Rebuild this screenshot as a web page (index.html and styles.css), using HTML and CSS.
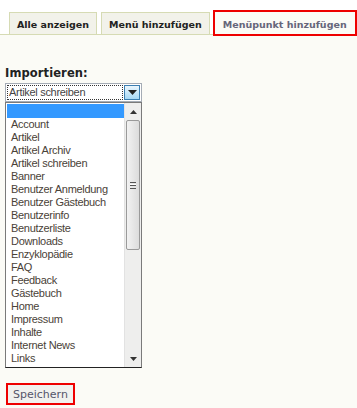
FILE: index.html
```html
<!DOCTYPE html>
<html lang="de">
<head>
    <meta charset="UTF-8">
    <title>Menü - Menüpunkt hinzufügen</title>
    <link rel="stylesheet" href="styles.css">
</head>
<body>
    <ul class="tabs">
        <li class="tab">Alle anzeigen</li>
        <li class="tab">Menü hinzufügen</li>
        <li class="tab active">Menüpunkt hinzufügen</li>
    </ul>

    <main class="content">
        <label class="field-label">Importieren:</label>
        <div class="combo">
            <div class="combo-box">
                <span class="combo-value">Artikel schreiben</span>
                <span class="combo-btn">
                    <svg width="9" height="5" viewBox="0 0 9 5"><path d="M0 0h9L4.5 5z" fill="#222"/></svg>
                </span>
            </div>
            <div class="combo-list">
                <ul class="options">
                    <li class="selected">&nbsp;</li>
                    <li>Account</li>
                    <li>Artikel</li>
                    <li>Artikel Archiv</li>
                    <li>Artikel schreiben</li>
                    <li>Banner</li>
                    <li>Benutzer Anmeldung</li>
                    <li>Benutzer Gästebuch</li>
                    <li>Benutzerinfo</li>
                    <li>Benutzerliste</li>
                    <li>Downloads</li>
                    <li>Enzyklopädie</li>
                    <li>FAQ</li>
                    <li>Feedback</li>
                    <li>Gästebuch</li>
                    <li>Home</li>
                    <li>Impressum</li>
                    <li>Inhalte</li>
                    <li>Internet News</li>
                    <li>Links</li>
                </ul>
                <div class="scrollbar">
                    <span class="arrow">
                        <svg width="7" height="4" viewBox="0 0 7 4"><path d="M0 4h7L3.5 0z" fill="#333"/></svg>
                    </span>
                    <div class="track">
                        <div class="thumb"><span class="grip"></span></div>
                    </div>
                    <span class="arrow">
                        <svg width="7" height="4" viewBox="0 0 7 4"><path d="M0 0h7L3.5 4z" fill="#333"/></svg>
                    </span>
                </div>
            </div>
        </div>

        <button class="save">Speichern</button>
    </main>
</body>
</html>
```

FILE: styles.css
```css
/* General */
body {
    margin: 0;
    background-color: #fbfbf6;
    font-family: "DejaVu Sans", Verdana, sans-serif;
    color: #333;
}

/* Tabs */
.tabs {
    display: flex;
    align-items: flex-end;
    gap: 4px;
    margin: 0;
    padding: 0 0 0 9px;
    list-style: none;
    background-color: #fff;
    border-bottom: 1px solid #d6dbb4;
    height: 34px;
}

.tab {
    height: 21px;
    line-height: 23px;
    padding: 0 7px;
    font-size: 9.5px;
    font-weight: bold;
    white-space: nowrap;
    color: #222;
    background-color: #f2f2ea;
    border: 1px solid #d6dbb4;
    border-bottom: none;
}

.tab.active {
    height: 22px;
    line-height: 25px;
    padding: 0 8px;
    margin-left: -1px;
    margin-bottom: -2px;
    color: #66667a;
    background-color: #fbfbf6;
    border: 2px solid #ee0000;
}

/* Content */
.content {
    padding: 31px 5px 0;
}

.field-label {
    display: block;
    font-size: 11.5px;
    font-weight: bold;
    color: #222;
    letter-spacing: 0.1px;
    margin-bottom: 3px;
}

/* Combo box */
.combo {
    width: 137px;
    font-family: "Liberation Sans", Arial, sans-serif;
    font-size: 11px;
    letter-spacing: -0.3px;
}

.combo-box {
    display: flex;
    align-items: center;
    height: 15px;
    border: 1px solid #a5acb5;
    background-color: #fff;
    padding: 1px;
}

.combo-value {
    flex: 1;
    height: 13px;
    line-height: 13px;
    padding-left: 1px;
    color: #444;
    border: 1px dotted #333;
    margin-right: 1px;
}

.combo-btn {
    display: flex;
    align-items: center;
    justify-content: center;
    width: 14px;
    height: 13px;
    border: 1px solid #3c7fb1;
    background: linear-gradient(#eaf6fd, #a7d9f5);
}

.combo-list {
    display: flex;
    height: 264px;
    border: 1px solid #7a7a7a;
    border-bottom-color: #222;
    background-color: #fff;
    overflow: hidden;
}

.options {
    flex: 1;
    margin: 0;
    padding: 1px 0 0 1px;
    list-style: none;
}

.options li {
    height: 13px;
    line-height: 13px;
    padding-left: 4px;
    color: #4a4238;
    white-space: nowrap;
}

.options li.selected {
    background-color: #3399ff;
    height: 14px;
}

/* Scrollbar */
.scrollbar {
    display: flex;
    flex-direction: column;
    width: 16px;
    background-color: #eeeeed;
    border-left: 1px solid #e2e2e2;
}

.arrow {
    display: flex;
    align-items: center;
    justify-content: center;
    height: 17px;
}

.track {
    flex: 1;
}

.thumb {
    display: flex;
    align-items: center;
    justify-content: center;
    height: 128px;
    margin: 0 1px;
    border: 1px solid #9a9a9a;
    border-radius: 2px;
    background: linear-gradient(90deg, #f2f2f2, #dcdcdc);
}

.grip {
    width: 6px;
    height: 5px;
    border-top: 1px solid #555;
    border-bottom: 1px solid #555;
    background: linear-gradient(#fff 0 1px, #555 1px 2px, transparent 2px);
    background-position: 0 1px;
    background-repeat: no-repeat;
}

/* Button */
.save {
    margin-top: 15px;
    margin-left: 1px;
    padding: 1px 5px;
    height: 22px;
    font-family: "DejaVu Sans", Verdana, sans-serif;
    font-size: 11px;
    color: #55556a;
    background-color: #f1f1ee;
    border: 2px solid #ee0000;
}
```
